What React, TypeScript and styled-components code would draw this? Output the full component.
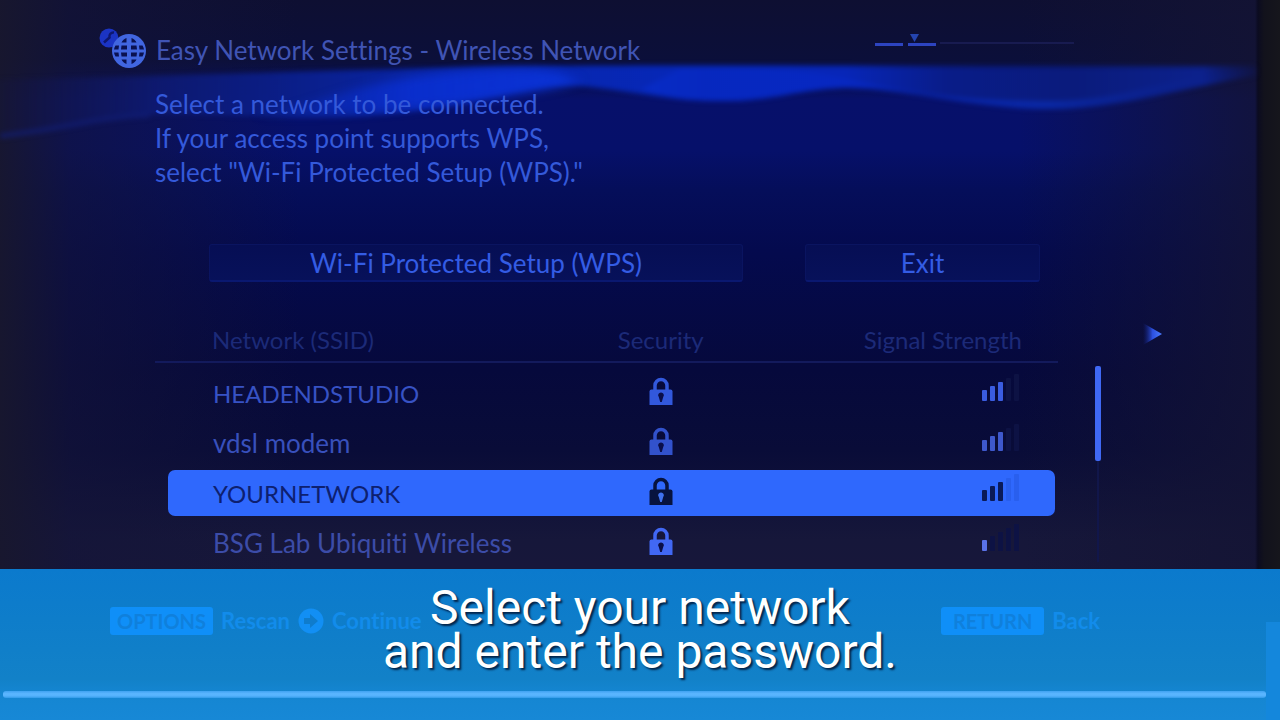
import React from "react";
import styled, { createGlobalStyle } from "styled-components";

const GlobalStyle = createGlobalStyle`
  *, *::before, *::after { box-sizing: border-box; }
  body {
    margin: 0;
    background: #0c0d33;
    font-family: Lato, "Noto Sans", sans-serif;
    font-variant-ligatures: none;
  }
`;

const Page = styled.div`
  position: relative;
  display: flex;
  flex-direction: column;
  min-height: 100vh;
  overflow: hidden;
  background:
    linear-gradient(to left, #16161c 0, #12121c 16px, #0b0b20 22px, rgba(20, 20, 52, 0.8) 25px, rgba(16, 18, 60, 0) 260px),
    linear-gradient(to right, rgba(24, 23, 46, 0.95) 0, rgba(20, 20, 56, 0.6) 70px, rgba(16, 18, 60, 0) 300px),
    linear-gradient(to bottom, #0e0f32 0, #0b0f3a 60px, #07106a 100px, #06106a 150px, #050e5a 190px, #040a4e 250px, #06093c 370px, #090c38 450px, #16173a 540px, #17173a 570px);
`;

const Backdrop = styled.svg`
  position: absolute;
  top: 50px;
  left: 0;
  width: 100%;
  height: 110px;
`;

const Main = styled.main`
  position: relative;
  flex: 1;
`;

const Header = styled.header`
  display: flex;
  align-items: center;
  height: 48px;
  margin-top: 26px;
  padding: 0 204px 0 98px;
`;

const Title = styled.h1`
  flex: 1;
  margin: 0 0 0 8px;
  font-size: 26px;
  font-weight: 400;
  line-height: 34px;
  color: #4054b4;
`;

const Steps = styled.svg`
  width: 202px;
  height: 32px;
`;

const Intro = styled.p`
  margin: 13px 0 0;
  padding: 0 155px;
  font-size: 26px;
  line-height: 34px;
  color: #3459da;
`;

const Actions = styled.div`
  display: grid;
  grid-template-columns: 534fr 235fr;
  column-gap: 62px;
  margin-top: 55px;
  padding: 0 240px 0 209px;
`;

const ActionButton = styled.button`
  height: 38px;
  padding: 0;
  border: 1px solid #0a1460;
  border-bottom: 2px solid #0a1870;
  border-radius: 3px;
  background: linear-gradient(to bottom, #060e54, #07115a);
  color: #345ce4;
  font: 400 26px/34px Lato, "Noto Sans", sans-serif;
  font-variant-ligatures: none;
`;

const Networks = styled.section`
  display: flex;
  align-items: flex-start;
  margin-top: 32px;
  padding: 0 118px 0 155px;
`;

const Table = styled.table`
  flex: 1;
  table-layout: fixed;
  border-collapse: separate;
  border-spacing: 0;
  font-size: 26px;
  line-height: 32px;
`;

const HeadCell = styled.th<{ $align: "left" | "center" | "right" }>`
  height: 54px;
  padding: 0 ${(p) => (p.$align === "right" ? 36 : 0)}px 2px ${(p) => (p.$align === "left" ? 57 : 0)}px;
  background: linear-gradient(#131a5c, #131a5c) 0 calc(100% - 5px) / 100% 2px no-repeat;
  font-size: 24px;
  font-weight: 400;
  text-align: ${(p) => p.$align};
  white-space: nowrap;
  color: #1c2a78;
`;

const Row = styled.tr<{ $selected?: boolean; $tone: string }>`
  color: ${(p) => p.$tone};

  td {
    height: 50px;
    padding: 0;
    border: 0 solid transparent;
    border-width: 2px 0;
    background-clip: padding-box;
    background-color: ${(p) => (p.$selected ? "#2f68fd" : "transparent")};
  }
  td:first-child {
    padding-left: 45px;
    border-left-width: 13px;
    border-radius: 20px 0 0 20px / 9px 0 0 9px;
  }
  td:nth-child(2) { text-align: center; }
  td:last-child {
    padding-right: 36px;
    border-right-width: 3px;
    border-radius: 0 10px 10px 0 / 0 9px 9px 0;
    text-align: right;
  }
  svg { display: inline-block; vertical-align: middle; }
`;

const Ssid = styled.span<{ $caps: boolean }>`
  font-size: ${(p) => (p.$caps ? 24 : 26)}px;
`;

const Rail = styled.div`
  width: 6px;
  height: 196px;
  margin: 52px 0 0 37px;
  background: linear-gradient(to right, transparent 2px, #11164a 2px, #11164a 4px, transparent 4px);
`;

const Thumb = styled.div`
  height: 95px;
  border-radius: 2px;
  background: #3f68f4;
`;

const NextButton = styled.button`
  display: block;
  width: 20px;
  height: 24px;
  margin: 8px 0 0 41px;
  padding: 0;
  border: 0;
  background: none;
`;

const Lower = styled.footer`
  position: relative;
  display: grid;
  grid-template-rows: 122px 7px 22px;
  background: linear-gradient(to bottom, #0b7acd 0, #0e7dca 50px, #1281c8 110px, #1586d2 125px, #1788d6 151px);
`;

const Guide = styled.div`
  grid-area: 1 / 1;
  display: flex;
  align-items: center;
  padding: 0 172px 18px 110px;
  font-size: 22px;
  font-weight: 700;
  line-height: 28px;
  color: #128ceb;
`;

const KeyHint = styled.button<{ $push?: boolean }>`
  display: flex;
  align-items: center;
  gap: 8px;
  margin: 0 8px 0 ${(p) => (p.$push ? "auto" : "0")};
  padding: 0;
  border: 0;
  background: none;
  color: inherit;
  font: inherit;
`;

const KeyCap = styled.span`
  min-width: 103px;
  height: 28px;
  border-radius: 3px;
  background: #0f8ff8;
  color: #0f80dc;
  font-size: 20px;
  text-align: center;
`;

const Caption = styled.p`
  grid-area: 1 / 1;
  z-index: 1;
  margin: 0;
  padding-top: 17px;
  font: 400 48px/44px Roboto, "Liberation Sans", sans-serif;
  text-align: center;
  color: #fff;
  text-shadow: 2px 2px 2px rgba(0, 20, 50, 0.85);
  pointer-events: none;
`;

const Ledge = styled.div`
  grid-row: 2;
  margin: 0 14px 0 3px;
  border-radius: 3px;
  background: linear-gradient(to bottom, #3fa2f2, #5cb6ff 40%, #55b2fd 70%, #329ae8);
`;

const Edge = styled.div`
  position: absolute;
  right: 0;
  top: 53px;
  bottom: 0;
  width: 14px;
  background: #1487dc;
`;

function GlobeIcon() {
  return (
    <svg width="50" height="48" viewBox="0 0 50 48" aria-hidden="true">
      <circle cx="11" cy="12" r="9.500" fill="#1b34c4" />
      <path d="M6 16.500l5.500-5a4 4 0 0 1 4.500-5" fill="none" stroke="#0d1770" strokeWidth="2.500" />
      <circle cx="31" cy="25" r="17" fill="#4166e0" />
      <g fill="#0a1150">
        <path d="M28.500 12v4.500h-5c1-2 2.800-3.700 5-4.500zM33.500 12v4.500h5c-1-2-2.800-3.700-5-4.500z" />
        <path d="M21 19.500h-3.500c-.8 1.200-1.300 2.500-1.500 4h4.500zM23.500 19.500h5.500v4h-6zM33 19.500h5.500l.5 4h-6zM41 19.500h3.500c.8 1.200 1.300 2.500 1.500 4h-4.500z" />
        <path d="M16 26.500h4.500l.5 4h-3.500c-.8-1.200-1.300-2.500-1.500-4zM23 26.500h6v4h-5.500zM33 26.500h6l-.5 4H33zM41.500 26.500H46c-.2 1.500-.7 2.800-1.500 4H41z" />
        <path d="M28.500 38v-4.500h-5c1 2 2.800 3.700 5 4.500zM33.500 38v-4.500h5c-1 2-2.800 3.700-5 4.500z" />
      </g>
    </svg>
  );
}

function LockIcon({ body, hole }: { body: string; hole: string }) {
  return (
    <svg width="24" height="34" viewBox="0 0 24 34" role="img" aria-label="Secured">
      <path d="M6 14V8.500a6 6 0 0 1 12 0V14" fill="none" stroke={body} strokeWidth="3.500" />
      <path d="M0.500 14.500q0-2 2-2h19q2 0 2 2V28H.5z" fill={body} />
      <path d="M12 15.500a2.800 2.800 0 0 1 2.200 4.600L12.800 25h-1.600l-1.400-4.900A2.800 2.800 0 0 1 12 15.500z" fill={hole} />
    </svg>
  );
}

function SignalIcon({ level, on, off }: { level: number; on: string; off: string }) {
  const bars = [
    { x: 0, h: 11 },
    { x: 8, h: 15 },
    { x: 16, h: 19 },
    { x: 24, h: 23 },
    { x: 32, h: 27 },
  ];
  return (
    <svg width="37" height="40" viewBox="0 0 37 40" role="img" aria-label={`Signal ${level} of 5`}>
      {bars.map((b, i) => (
        <rect key={b.x} x={b.x} y={28 - b.h} width="5" height={b.h} rx="1" fill={i < level ? on : off} />
      ))}
    </svg>
  );
}

function Waves() {
  return (
    <Backdrop viewBox="0 50 1280 110" preserveAspectRatio="none" aria-hidden="true">
      <defs>
        <linearGradient id="sheet" x1="0" x2="1280" y1="0" y2="0" gradientUnits="userSpaceOnUse">
          <stop offset="0" stopColor="#141648" stopOpacity="0.2" />
          <stop offset="0.12" stopColor="#0e1a72" stopOpacity="0.9" />
          <stop offset="0.24" stopColor="#0a1f8c" />
          <stop offset="0.36" stopColor="#0826ac" />
          <stop offset="0.55" stopColor="#0627b8" />
          <stop offset="0.66" stopColor="#0726b8" />
          <stop offset="0.74" stopColor="#091c88" />
          <stop offset="0.84" stopColor="#0a1b7c" />
          <stop offset="0.94" stopColor="#0c218c" />
          <stop offset="0.985" stopColor="#0e1860" stopOpacity="0.2" />
        </linearGradient>
        <linearGradient id="ribbon" x1="0" x2="1280" y1="0" y2="0" gradientUnits="userSpaceOnUse">
          <stop offset="0.18" stopColor="#0b2cc0" stopOpacity="0" />
          <stop offset="0.32" stopColor="#0a2fd0" stopOpacity="0.9" />
          <stop offset="0.44" stopColor="#0a32d4" />
          <stop offset="0.55" stopColor="#0729c4" stopOpacity="0.6" />
          <stop offset="0.66" stopColor="#0728c4" stopOpacity="0.8" />
          <stop offset="0.82" stopColor="#0a28a4" />
          <stop offset="0.98" stopColor="#0c1f88" stopOpacity="0" />
        </linearGradient>
        <filter id="soft" x="-5%" y="-20%" width="110%" height="140%" colorInterpolationFilters="sRGB">
          <feGaussianBlur stdDeviation="2.500" />
        </filter>
        <filter id="softer" x="-10%" y="-40%" width="120%" height="180%" colorInterpolationFilters="sRGB">
          <feGaussianBlur stdDeviation="5" />
        </filter>
      </defs>
      <g filter="url(#soft)">
        <path
          d="M-20 80C200 76 380 68 560 66S1000 68 1256 66V76C1190 86 1120 109 1050 109S900 88 850 88S780 101 720 101S600 84 555 85S440 117 320 117S190 110 120 117S50 130 -20 140z"
          fill="url(#sheet)"
        />
        <path
          d="M680 69C780 66 830 74 870 84S970 101 1050 101S1170 74 1256 68V76C1190 86 1120 109 1050 109S900 88 850 88S780 101 720 101S660 92 640 90z"
          fill="url(#ribbon)"
        />
        <path d="M0 136C60 130 90 118 150 115" fill="none" stroke="#12207c" strokeWidth="5" strokeOpacity="0.6" />
      </g>
      <g filter="url(#softer)">
        <path d="M250 116C310 110 350 80 460 72S560 78 580 80S420 118 250 116z" fill="url(#ribbon)" />
      </g>
    </Backdrop>
  );
}

const networks = [
  { ssid: "HEADENDSTUDIO", level: 3, tone: "#3752c4", icon: "#3258dc", signal: "#3a5ce0" },
  { ssid: "vdsl modem", level: 3, tone: "#3850bc", icon: "#3252cc", signal: "#3e58cc" },
  { ssid: "YOURNETWORK", level: 3, tone: "#0d2070", icon: "#07133f", signal: "#0a1a58", selected: true },
  { ssid: "BSG Lab Ubiquiti Wireless", level: 1, tone: "#3c4ca8", icon: "#4168f4", signal: "#5a72e8" },
];

export default function App() {
  return (
    <Page>
      <GlobalStyle />
      <Waves />
      <Main>
        <Header>
          <GlobeIcon />
          <Title>Easy Network Settings - Wireless Network</Title>
          <Steps viewBox="0 0 202 32" role="img" aria-label="Step 2">
            <path d="M66 9h134" stroke="#181b50" strokeWidth="2" />
            <path d="M1 10.500h28M34 10.500h28" stroke="#2d44c0" strokeWidth="3" />
            <path d="M36 0h9l-4.500 8z" fill="#2444b0" />
          </Steps>
        </Header>
        <Intro>
          Select a network to be connected.
          <br />
          If your access point supports WPS,
          <br />
          select "Wi-Fi Protected Setup (WPS)."
        </Intro>
        <Actions>
          <ActionButton type="button">Wi-Fi Protected Setup (WPS)</ActionButton>
          <ActionButton type="button">Exit</ActionButton>
        </Actions>
        <Networks>
          <Table>
            <colgroup>
              <col style={{ width: "42%" }} />
              <col style={{ width: "28%" }} />
              <col style={{ width: "30%" }} />
            </colgroup>
            <thead>
              <tr>
                <HeadCell scope="col" $align="left">Network (SSID)</HeadCell>
                <HeadCell scope="col" $align="center">Security</HeadCell>
                <HeadCell scope="col" $align="right">Signal Strength</HeadCell>
              </tr>
            </thead>
            <tbody>
              {networks.map((n) => (
                <Row key={n.ssid} $tone={n.tone} $selected={n.selected}>
                  <td>
                    <Ssid $caps={n.ssid === n.ssid.toUpperCase()}>{n.ssid}</Ssid>
                  </td>
                  <td>
                    <LockIcon body={n.icon} hole={n.selected ? "#3f72f0" : "#0a0e48"} />
                  </td>
                  <td>
                    <SignalIcon level={n.level} on={n.signal} off={n.selected ? "#295fee" : "#0d1244"} />
                  </td>
                </Row>
              ))}
            </tbody>
          </Table>
          <Rail>
            <Thumb />
          </Rail>
          <NextButton type="button" aria-label="Next">
            <svg width="20" height="24" viewBox="0 0 20 24" aria-hidden="true">
              <defs>
                <linearGradient id="arrow">
                  <stop offset="0" stopColor="#14248c" stopOpacity="0" />
                  <stop offset="0.5" stopColor="#2c50e0" />
                  <stop offset="1" stopColor="#4a7cff" />
                </linearGradient>
              </defs>
              <path d="M1 1L20 12L1 23z" fill="url(#arrow)" />
            </svg>
          </NextButton>
        </Networks>
      </Main>
      <Lower>
        <Guide>
          <KeyHint type="button">
            <KeyCap>OPTIONS</KeyCap>
            Rescan
          </KeyHint>
          <KeyHint type="button">
            <svg width="26" height="28" viewBox="0 0 26 28" aria-hidden="true">
              <circle cx="13" cy="14" r="12.500" fill="#128ff4" />
              <path d="M6 11h6V7l8 7-8 7v-4H6z" fill="#0f7ccc" />
            </svg>
            Continue
          </KeyHint>
          <KeyHint type="button" $push>
            <KeyCap>RETURN</KeyCap>
            Back
          </KeyHint>
        </Guide>
        <Caption>
          Select your network
          <br />
          and enter the password.
        </Caption>
        <Ledge />
        <Edge />
      </Lower>
    </Page>
  );
}
